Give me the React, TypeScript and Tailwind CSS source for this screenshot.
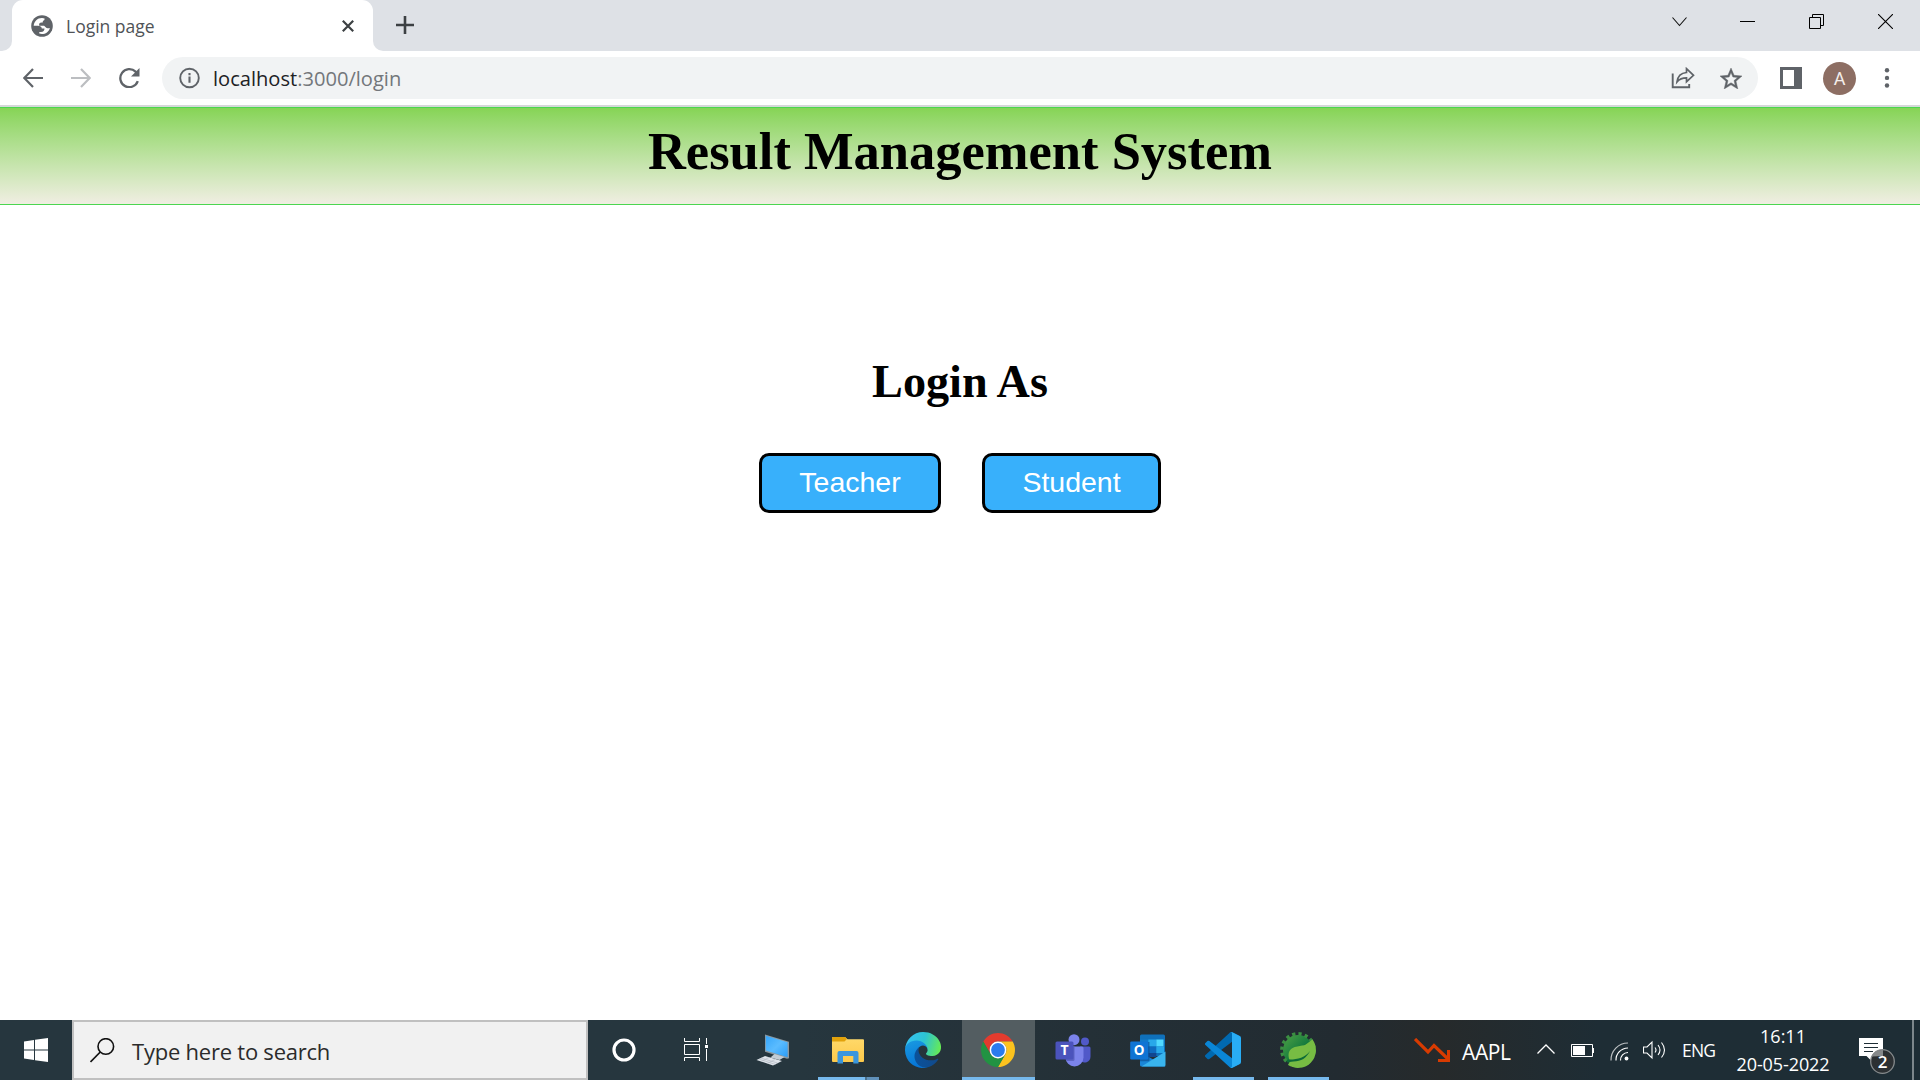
import React from 'react';

const ui = "font-['Open_Sans','Noto_Sans',sans-serif]";

function TabStrip() {
  return (
    <div className="flex h-[51px] bg-[#dee1e6]">
      <div className="flex h-full w-3 items-end bg-white">
        <div className="h-full w-full rounded-br-[10px] bg-[#dee1e6]" />
      </div>
      <div className="flex h-full w-[361px] items-center rounded-t-[11px] bg-white pl-[19px]">
        <svg width="22" height="22" viewBox="0 0 22 22" className="shrink-0">
          <circle cx="11" cy="11" r="10.8" fill="#5f6368" />
          <path
            d="M10.8 3C6.5 3 3 6.500 2.700 10.800h4.200c2.400 0 3.700 1 3.900 2.700h2.700v-.2c0 2.200-1 3.700-3.500 3.700H8.300v1.600c4.500 1.500 9.500-1.200 10.600-5.700-1.200.8-3.300.500-4.200-.6-.8-.9-1-1.500-2.600-1.500H8.200c-.4-2.100.4-3.300 2.300-3.300h1.200c0-1.300.4-2.100 1.700-2.500L13.600 3.400A8 8 0 0 0 10.800 3z"
            fill="#fff"
          />
        </svg>
        <span className="ml-[13px] text-[17.500px] leading-6 text-[#505357]">Login page</span>
        <svg width="12" height="12" viewBox="0 0 12 12" className="ml-auto mr-[19px]">
          <path d="M.8.8l10.400 10.400M11.200.8L.8 11.200" stroke="#3c4043" strokeWidth="2.200" />
        </svg>
      </div>
      <div className="h-full w-[11px] bg-white">
        <div className="h-full w-full rounded-bl-[10px] bg-[#dee1e6]" />
      </div>
      <svg width="18" height="18" viewBox="0 0 18 18" className="ml-3 mt-4">
        <path d="M9 0v18M0 9h18" stroke="#3c4043" strokeWidth="2.600" />
      </svg>
      <div className="ml-auto mr-[27px] flex items-start pt-[14px]">
        <svg width="15" height="15" viewBox="0 0 15 15" className="mr-[53px]">
          <path d="M.5 3.500l7 8 7-8" fill="none" stroke="#111" strokeWidth="1.100" />
        </svg>
        <svg width="15" height="15" viewBox="0 0 15 15" className="mr-[54px]">
          <path d="M0 7.500h15" stroke="#000" />
        </svg>
        <svg width="15" height="15" viewBox="0 0 15 15" className="mr-[54px]">
          <path d="M.5 3.500h11v11H.5zM3.500 3.500v-3h11v11h-3" fill="none" stroke="#000" />
        </svg>
        <svg width="15" height="15" viewBox="0 0 15 15">
          <path d="M0 0l15 15M15 0L0 15" stroke="#000" strokeWidth="1.100" />
        </svg>
      </div>
    </div>
  );
}

function Toolbar() {
  return (
    <div className="flex h-[54px] items-center bg-white pl-[23px]">
      <svg width="20" height="20" viewBox="0 0 20 20">
        <path d="M20 10H1.500M10 1L1.300 10 10 19" fill="none" stroke="#5f6368" strokeWidth="2.200" />
      </svg>
      <svg width="20" height="20" viewBox="0 0 20 20" className="ml-7">
        <path d="M0 10h18.500M10 1l8.700 9-8.700 9" fill="none" stroke="#bcbec1" strokeWidth="2.200" />
      </svg>
      <svg width="21" height="20" viewBox="0 0 21 20" className="ml-7">
        <path d="M18.800 13.200A9 9 0 1 1 16.600 3.700L18.500 6" fill="none" stroke="#5f6368" strokeWidth="2.300" />
        <path d="M20.500 0v8.500H12z" fill="#5f6368" />
      </svg>
      <div className="ml-[22px] flex h-[42px] w-[1596px] items-center rounded-full bg-[#f1f3f4] pl-[17px] pr-4">
        <svg width="22" height="22" viewBox="0 0 22 22">
          <circle cx="10.500" cy="11" r="9.300" fill="none" stroke="#5f6368" strokeWidth="1.900" />
          <path d="M10.500 9.500v6.300M10.500 6v2.200" stroke="#5f6368" strokeWidth="2.100" />
        </svg>
        <span className="ml-3 mt-[2px] text-[20.100px] leading-7 text-[#202124]">
          localhost<span className="text-[#73777b]">:3000/login</span>
        </span>
        <svg width="24" height="22" viewBox="0 0 24 22" className="ml-auto">
          <path d="M1.700 6.500v13.700h16.500V17" fill="none" stroke="#5f6368" strokeWidth="1.900" />
          <path
            d="M15.500 1.700l7 6.600-7 6.400v-3.800c-4 0-7 1-9.500 4 .7-5.500 4-9 9.500-9.400z"
            fill="none"
            stroke="#5f6368"
            strokeWidth="1.700"
          />
        </svg>
        <svg width="22" height="21" viewBox="2 2 20 19" className="ml-[25px]">
          <path
            d="M22 9.240l-7.190-.62L12 2 9.190 8.630 2 9.240l5.460 4.730L5.820 21 12 17.270 18.180 21l-1.630-7.030L22 9.240zM12 15.400l-3.760 2.270 1-4.280-3.320-2.880 4.380-.38L12 6.100l1.710 4.040 4.380.38-3.320 2.880 1 4.280L12 15.400z"
            fill="#5f6368"
            stroke="#5f6368"
            strokeWidth=".4"
          />
        </svg>
      </div>
      <svg width="22" height="22" viewBox="0 0 22 22" className="ml-[22px]">
        <path d="M0 0h22v22H0zM3 3v16h11V3z" fill="#5f6368" fillRule="evenodd" />
      </svg>
      <div className="ml-[21px] flex size-[33px] items-center justify-center rounded-full bg-[#8d6e63] pt-px font-[Roboto,sans-serif] text-[18px] text-[#f4eeec]">
        A
      </div>
      <svg width="6" height="20" viewBox="0 0 6 20" className="ml-7">
        <circle cx="3" cy="2.300" r="2.200" fill="#5f6368" />
        <circle cx="3" cy="9.900" r="2.200" fill="#5f6368" />
        <circle cx="3" cy="17.500" r="2.200" fill="#5f6368" />
      </svg>
    </div>
  );
}

function LoginPage() {
  const button =
    'h-[60px] rounded-[10px] border-[3px] border-black bg-[#38b0fb] pb-[2px] text-[28.500px] leading-none text-white';
  return (
    <main className="flex-1 bg-white font-['Liberation_Serif',serif] text-black">
      <header className="flex h-[98px] justify-center border-y border-[#4cd650] bg-linear-to-b from-[#86d455] to-[#f0eee2]">
        <h1 className="mt-[13px] text-[52.500px] font-bold leading-[60px]">Result Management System</h1>
      </header>
      <h2 className="mt-[151px] text-center text-[46.200px] font-bold leading-[52px]">Login As</h2>
      <div className="mt-[45px] flex justify-center gap-[41px] font-['Liberation_Sans',sans-serif]">
        <button className={button + ' w-[182px]'}>Teacher</button>
        <button className={button + ' w-[179px]'}>Student</button>
      </div>
    </main>
  );
}

function Task({ children, line, active }: { children: React.ReactNode; line?: 'wide' | 'split'; active?: boolean }) {
  return (
    <div className="flex h-full w-[75px] shrink-0 px-px">
      <div className={active ? 'flex w-full flex-col bg-[#535d61]' : 'flex w-full flex-col px-[6px]'}>
        <div className="flex h-[57px] items-center justify-center pr-[2px] pt-[3px]">{children}</div>
        {active && <div className="h-[3px] bg-[#76b9ed]" />}
        {line === 'wide' && <div className="h-[3px] bg-[#76b9ed]" />}
        {line === 'split' && (
          <div className="flex h-[3px]">
            <div className="w-[47px] bg-[#76b9ed]" />
            <div className="w-[2px] bg-[#4a708b]" />
            <div className="flex-1 bg-[#6091ba]" />
          </div>
        )}
      </div>
    </div>
  );
}

function ComputerIcon() {
  return (
    <svg width="36" height="36" viewBox="0 0 36 36" className="shrink-0">
      <defs>
        <linearGradient id="screen" x1="0" y1="0" x2="1" y2="1">
          <stop offset="0" stopColor="#35a5fa" />
          <stop offset=".5" stopColor="#5bbcff" />
          <stop offset="1" stopColor="#2a9df8" />
        </linearGradient>
      </defs>
      <path d="M10 2.500l24 7.200v16.500l-2 .5-22-7z" fill="#8b979e" />
      <path d="M10.800 3.800L32.600 10.300v14.900L10.800 18.500z" fill="url(#screen)" />
      <path d="M19.500 22l10 3-5 3-9-2.500z" fill="#c2ccd4" />
      <path d="M10 24l17 5-9 4.500L1.500 28z" fill="#dfe4ea" />
      <path d="M6 26l16.500 5M4 27l16.500 5.500M14 25.500l-8 4M20 27.500l-8 4" stroke="#aeb6bf" strokeWidth=".6" />
    </svg>
  );
}

function FolderIcon() {
  return (
    <svg width="32" height="27" viewBox="0 0 32 27">
      <defs>
        <linearGradient id="folder" x1="0" y1="0" x2="0" y2="1">
          <stop offset="0" stopColor="#ffda6c" />
          <stop offset="1" stopColor="#fdc94a" />
        </linearGradient>
      </defs>
      <path d="M0 1q0-1 1-1h12l2.500 2.200H31q1 0 1 1V24q0 1-1 1H1q-1 0-1-1z" fill="url(#folder)" />
      <path d="M0 1q0-1 1-1h12l2 2-2.500 2.400H0z" fill="#e2a20b" />
      <path d="M5.500 26.500V16q0-2 2-2h17q2 0 2 2v10.500h-5.200V19H11v7.500z" fill="#3a96dd" />
    </svg>
  );
}

function EdgeIcon() {
  return (
    <svg width="36" height="36" viewBox="0 0 256 256">
      <defs>
        <linearGradient id="edgeTop" x1="0" y1=".4" x2="1" y2=".6">
          <stop offset="0" stopColor="#35c1f1" />
          <stop offset=".5" stopColor="#2dc3d2" />
          <stop offset="1" stopColor="#66eb54" />
        </linearGradient>
        <linearGradient id="edgeLeft" x1="0" y1="0" x2=".3" y2="1">
          <stop offset="0" stopColor="#1b9de2" />
          <stop offset="1" stopColor="#0675d6" />
        </linearGradient>
        <linearGradient id="edgeLow" x1="0" y1="0" x2="1" y2="0">
          <stop offset="0" stopColor="#0a529c" />
          <stop offset="1" stopColor="#114a8b" />
        </linearGradient>
      </defs>
      <path d="M231 190.500A93.700 93.700 0 0 1 220.500 195.200 101.900 101.900 0 0 1 184.600 201.600c-47.300 0-88.500-32.500-88.500-74.300A31.500 31.500 0 0 1 112.500 100C69.700 101.800 58.700 146.400 58.700 172.500 58.700 246.400 126.800 253.900 141.500 253.900c7.900 0 19.800-2.300 27-4.600l1.300-.4a128.300 128.300 0 0 0 66.600-52.800 4 4 0 0 0-5.400-5.600z" fill="url(#edgeLow)" />
      <path d="M105.700 241.400A79.200 79.200 0 0 1 83 220.100 80.700 80.700 0 0 1 112.500 100.200c3.100-1.500 8.500-4.200 15.600-4.100A32.400 32.400 0 0 1 153.800 109.100 31.900 31.900 0 0 1 160.200 127.800C160.200 127.600 184.600 48.200 80 48.200 36 48.200 0 89.900 0 126.500a130.200 130.200 0 0 0 12.100 56A128 128 0 0 0 168.500 249.300a75.500 75.500 0 0 1-62.800-7.900z" fill="url(#edgeLeft)" />
      <path d="M152.300 148.900C151.500 149.900 149 151.400 149 154.600c0 2.600 1.700 5.200 4.800 7.300 14.400 10.100 41.700 8.700 41.700 8.700A59.800 59.800 0 0 0 225.900 162.200 61.600 61.600 0 0 0 256.300 109C256.600 86.700 248.300 71.900 245 65.300 223.900 24 178.300.2 128.700.2A128 128 0 0 0 .7 126.400C1.200 89.900 37.500 60.400 80.700 60.400c3.500 0 23.500.3 42 10.100 16.300 8.600 24.900 18.900 30.800 29.200 6.200 10.700 7.300 24.100 7.300 29.500 0 5.300-2.700 13.300-8.500 19.700z" fill="url(#edgeTop)" />
    </svg>
  );
}

function ChromeIcon() {
  return (
    <svg width="34" height="34" viewBox="0 0 34 34">
      <path d="M2.300 8.500A17 17 0 0 1 31.700 8.500H17A8.500 8.500 0 0 0 9.640 21.250z" fill="#e33b2e" />
      <path d="M31.700 8.500A17 17 0 0 1 17 34L24.360 21.250A8.500 8.500 0 0 0 17 8.500z" fill="#fcc31e" />
      <path d="M17 34A17 17 0 0 1 2.300 8.500L9.640 21.250A8.500 8.500 0 0 0 24.360 21.250z" fill="#229342" />
      <circle cx="17" cy="17" r="8.400" fill="#fff" />
      <circle cx="17" cy="17" r="6.900" fill="#2b7bee" />
    </svg>
  );
}

function TeamsIcon() {
  return (
    <svg width="36" height="33" viewBox="0 0 36 33">
      <circle cx="30" cy="7.500" r="4" fill="#5059c9" />
      <path d="M25 12.500h9q1.500 0 1.500 1.500v8.500a6 6 0 0 1-10.500 4z" fill="#5059c9" />
      <circle cx="19" cy="5.700" r="5.500" fill="#7b83eb" />
      <path d="M11 12.500h16q1.500 0 1.500 1.500v9.500a9 9 0 0 1-18 0z" fill="#7b83eb" />
      <path d="M10.500 12.500h9v13q0 1.500-1.500 1.500h-6.500q-1-2-1-4z" fill="#5d64c4" />
      <rect x=".5" y="7.500" width="18" height="18" rx="1.500" fill="#4b53bc" />
      <text x="9.500" y="21.200" textAnchor="middle" fontSize="14" fontWeight="700" fill="#fff" className="font-['Open_Sans',sans-serif]">T</text>
    </svg>
  );
}

function OutlookIcon() {
  return (
    <svg width="36" height="33" viewBox="0 0 36 33">
      <path d="M10 2q0-1.500 1.500-1.500h22Q35 .5 35 2v20H10z" fill="#0f70ba" />
      <path d="M10 5.500h8.300v7H10z" fill="#1179c9" />
      <path d="M18.300 5.500h8v7h-8z" fill="#28a8ea" />
      <path d="M26.300 5.500H33.500v7h-7.200z" fill="#50d9ff" />
      <path d="M18.300 12.500h8v6.500h-8z" fill="#0f6abf" />
      <path d="M26.300 12.500H34v6.500h-7.700z" fill="#28a8ea" />
      <path d="M18.300 19h8v4h-8z" fill="#12458f" />
      <path d="M10 18l25.500 14.500h-24q-1.500 0-1.500-1.500z" fill="#1a86d8" />
      <path d="M35.500 17.500v13.500q0 1.500-1.500 1.500H11.500z" fill="#39b4ee" />
      <path d="M10 8h9.500v18q0 1.300-1.300 1.300H10z" fill="#0b4a88" opacity=".6" />
      <rect x=".2" y="7.500" width="18" height="18" rx="1.300" fill="#0f74d4" />
      <text x="9.200" y="21.200" textAnchor="middle" fontSize="13.500" fontWeight="700" fill="#fff" className="font-['Open_Sans',sans-serif]">O</text>
    </svg>
  );
}

function CodeIcon() {
  return (
    <svg width="36" height="36" viewBox="0 0 100 100">
      <path d="M96.460 10.800L75.860.880a6.230 6.230 0 0 0-7.110 1.200L1.300 63.580a4.170 4.170 0 0 0 0 6.160l5.510 5.010a4.170 4.170 0 0 0 5.320.240L93.360 13.370c2.730-2.070 6.640-.130 6.640 3.300v-.240a6.250 6.250 0 0 0-3.540-5.630z" fill="#0069b0" />
      <path d="M96.460 89.200l-20.600 9.920a6.230 6.230 0 0 1-7.110-1.200L1.300 36.420a4.170 4.170 0 0 1 0-6.160l5.510-5.010a4.170 4.170 0 0 1 5.320-.240l81.230 61.620c2.730 2.070 6.640.130 6.640-3.300v.240a6.250 6.250 0 0 1-3.540 5.630z" fill="#0a86d6" />
      <path d="M75.860 99.130a6.230 6.230 0 0 1-7.110-1.210c2.310 2.310 6.250.670 6.250-2.590V4.670c0-3.260-3.940-4.890-6.250-2.590a6.230 6.230 0 0 1 7.110-1.210l20.600 9.910A6.250 6.250 0 0 1 100 16.410v67.180a6.250 6.250 0 0 1-3.540 5.630z" fill="#29adf5" />
    </svg>
  );
}

function SpringIcon() {
  return (
    <svg width="36" height="36" viewBox="0 0 36 36">
      <defs>
        <linearGradient id="gear" x1="0" y1="0" x2="1" y2="1">
          <stop offset="0" stopColor="#4fa244" />
          <stop offset=".55" stopColor="#137a3e" />
        </linearGradient>
      </defs>
      <circle cx="18" cy="18" r="15" fill="url(#gear)" />
      <circle cx="18" cy="18" r="16.200" fill="none" stroke="#3b8f42" strokeWidth="3.400" strokeDasharray="3.200 3.160" />
      <path d="M32.500 7.500A17.900 17.900 0 0 1 8.200 33L13 22z" fill="#77bc43" />
      <path
        d="M32.700 7.500c1.500 8-.5 13.500-7 16.500-6 2.500-12 1.500-16 4.500-2.500-6.500-1-11.500 5-13.500 7-2 13-.5 18-7.500z"
        fill="#77bc43"
      />
      <path d="M8.500 27.500c8 .3 16.500-1.500 21.500-8.500-3.500 7-9 10.500-16.500 10.500-3 0-5.500 1-5.500 1z" fill="#0d6b37" />
      <circle cx="8.200" cy="29" r="1.600" fill="#0d6b37" />
    </svg>
  );
}

function Taskbar() {
  return (
    <footer className="flex h-[60px] shrink-0 items-center bg-[#1e2d35] text-white">
      <div className="flex h-full w-[1336px] items-center bg-linear-to-r from-[#26363e] from-60% to-[#222b31]">
        <div className="flex w-[72px] justify-center">
          <svg width="24" height="24" viewBox="0 0 24 24">
            <path d="M0 3.400L10 2v9.400H0zM11 1.800L24 0v11.400H11zM0 12.400h10V22L0 20.600zM11 12.400h13V24l-13-1.800z" fill="#fff" />
          </svg>
        </div>
        <div className="flex h-full w-[516px] items-center border-2 border-[#c0c0c0] bg-[#f1f1f1] pl-4">
          <svg width="25" height="25" viewBox="0 0 25 25">
            <circle cx="15.800" cy="8.500" r="7.800" fill="none" stroke="#111" strokeWidth="1.600" />
            <path d="M10.300 14L.5 23.900" stroke="#111" strokeWidth="1.700" />
          </svg>
          <span className="ml-[17px] mt-px text-[22px] leading-7 tracking-[-0.230px] text-[#2b2b2b]">Type here to search</span>
        </div>
        <div className="flex w-[72px] justify-center">
          <svg width="24" height="24" viewBox="0 0 24 24">
            <circle cx="12" cy="12" r="10" fill="none" stroke="#fff" strokeWidth="3.200" />
          </svg>
        </div>
        <div className="mr-1 flex w-[72px] justify-center">
          <svg width="24" height="24" viewBox="0 0 24 24">
            <path d="M.5 0v3.500h15V0M.5 6.500h15v10H.5zM.5 23v-3.500h15V23M22.500 0v6M22.500 11v12" fill="none" stroke="#fff" />
            <path d="M21 7h3v3h-3z" fill="#fff" />
          </svg>
        </div>
        <Task><ComputerIcon /></Task>
        <Task line="split"><FolderIcon /></Task>
        <Task><EdgeIcon /></Task>
        <Task active><ChromeIcon /></Task>
        <Task><TeamsIcon /></Task>
        <Task><OutlookIcon /></Task>
        <Task line="wide"><CodeIcon /></Task>
        <Task line="wide"><SpringIcon /></Task>
      </div>
      <div className="flex h-full flex-1 items-center bg-linear-to-r from-[#222b31] via-[#262a2b] via-18% to-[#1e2d35] to-45% pl-[78px]">
        <svg width="37" height="24" viewBox="0 0 37 24">
          <path d="M1 1l13 13 6-6.500L34 21" fill="none" stroke="#d83b01" strokeWidth="3.200" />
          <path d="M34.500 12v10.500H24" fill="none" stroke="#d83b01" strokeWidth="3" />
        </svg>
        <span className="ml-[11px] mt-[3px] w-[75px] text-[21px] leading-7 tracking-[-0.400px]">AAPL</span>
        <svg width="18" height="10" viewBox="0 0 18 10" className="-mt-[3px]">
          <path d="M.5 9.500L9 1l8.500 8.500" fill="none" stroke="#fff" strokeWidth="1.300" />
        </svg>
        <svg width="23" height="13" viewBox="0 0 23 13" className="ml-4 mt-px">
          <path d="M.5.5h21v12H.5z" fill="none" stroke="#fff" />
          <path d="M2 2h12v9H2zM22 4h1v5h-1z" fill="#fff" />
        </svg>
        <svg width="19" height="19" viewBox="0 0 19 19" className="ml-4 mt-[2px]">
          <g fill="none" stroke="#fff" strokeWidth="1.200">
            <path d="M18 1A17 17 0 0 0 1 18.500" opacity=".7" />
            <path d="M18 6A12 12 0 0 0 6 18.500M18 10.500A7.500 7.500 0 0 0 10.500 18.500" />
          </g>
          <circle cx="16.500" cy="16.500" r="1.900" fill="#fff" />
        </svg>
        <svg width="23" height="20" viewBox="0 0 23 20" className="ml-[14px]">
          <g fill="none" stroke="#fff" strokeWidth="1.100">
            <path d="M.5 7h3.500L9 2v16L4 13H.5z" />
            <path d="M12 7.500q2 2.500 0 5M15 5q4 5 0 10M18.500 2.500q6 7.500 0 15" />
          </g>
        </svg>
        <span className="ml-4 w-[34px] whitespace-nowrap text-[17.500px] leading-6 tracking-[-0.800px]">ENG</span>
        <div className="-mt-px ml-[18px] flex w-[98px] flex-col items-center whitespace-nowrap text-[18px] leading-7">
          <span>16:11</span>
          <span className="tracking-[-0.100px]">20-05-2022</span>
        </div>
        <svg width="38" height="38" viewBox="0 0 38 38" className="ml-[27px] mt-[12px]">
          <path d="M0 1h24v18H13v5.500L7.500 19H0z" fill="#fff" />
          <path d="M5 6.500h14M5 10.500h14M5 14.500h9" stroke="#1e2d35" />
          <circle cx="23.500" cy="24.500" r="11.800" fill="#2c3033" stroke="#878b8d" strokeWidth="1.300" />
          <path d="M12.500 19.500A11.500 11.500 0 0 1 24 13v6z" fill="#85888a" />
          <text x="23.500" y="30.800" textAnchor="middle" fontSize="17" fontWeight="600" fill="#fff" className="font-['Open_Sans',sans-serif]">2</text>
        </svg>
        <div className="ml-auto mr-[6px] h-full w-[2px] bg-[#7d868b]" />
      </div>
    </footer>
  );
}

export default function App() {
  return (
    <div className={'flex h-[1080px] w-[1920px] flex-col overflow-hidden bg-white ' + ui}>
      <TabStrip />
      <Toolbar />
      <div className="h-[2px] shrink-0 bg-[#d6d8d9]" />
      <LoginPage />
      <Taskbar />
    </div>
  );
}
